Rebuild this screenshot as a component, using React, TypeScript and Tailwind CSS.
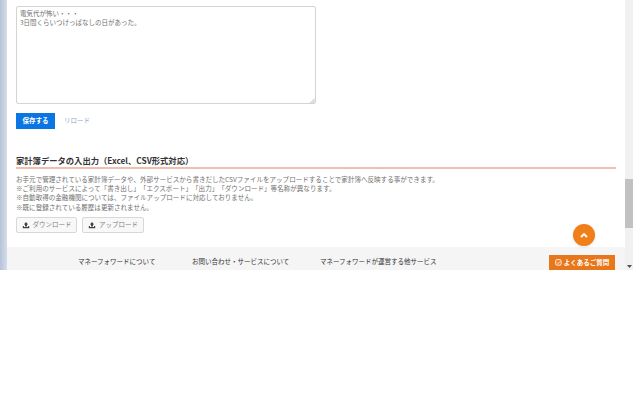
const jp = { fontFamily: '"Noto Sans CJK JP", "Liberation Sans", sans-serif' };

function Arrow() {
  return (
    <svg width="8" height="8" viewBox="0 0 8 8" className="shrink-0">
      <path d="M4 1 L6.2 3.6 H5 V5.5 H3 V3.6 H1.8 Z" fill="#444" />
      <path d="M0.8 5 V7.2 H7.2 V5 H6 V6 H2 V5 Z" fill="#444" />
    </svg>
  );
}

export default function App() {
  return (
    <div className="w-[640px] h-[400px] bg-white overflow-hidden [text-spacing-trim:space-all]" style={jp}>
      <div className="flex h-[270px] w-[633px]">
        <div className="w-[7px] shrink-0 bg-gradient-to-r from-[#b7c3d6] to-[#d3ddec]" />
        <div className="flex-1 min-w-0 flex flex-col">
          <div className="flex-1 pl-[9px] pr-[9px] pt-[6px]">
            <div className="relative w-[300px] h-[98px] border border-[#d4d4d4] rounded-[2px] px-[3px] py-[2px] text-[6.5px] leading-[9px] text-[#707070]">
              <div>電気代が怖い・・・</div>
              <div>3日間くらいつけっぱなしの日があった。</div>
              <svg width="5" height="5" viewBox="0 0 5 5" className="absolute right-0 bottom-0">
                <path d="M0.5 5 L5 0.5 M2.5 5 L5 2.5" stroke="#aaa" strokeWidth="0.8" />
              </svg>
            </div>
            <div className="flex items-center mt-[9px] h-[16px]">
              <div className="w-[39px] h-[16px] bg-[#0b76e3] text-white text-[6.5px] font-bold flex items-center justify-center">保存する</div>
              <div className="ml-[9px] text-[6.5px] text-[#8fa9c8]">リロード</div>
            </div>
            <div className="mt-[25px] text-[8.3px] leading-[12px] font-bold text-[#333]">家計簿データの入出力（Excel、CSV形式対応）</div>
            <div className="mt-[1px] h-[2px] bg-[#efbfae]" />
            <div className="mt-[6px] text-[6.55px] leading-[9.2px] text-[#707070] whitespace-nowrap">
              <div>お手元で管理されている家計簿データや、外部サービスから書きだしたCSVファイルをアップロードすることで家計簿へ反映する事ができます。</div>
              <div>※ご利用のサービスによって「書き出し」「エクスポート」「出力」「ダウンロード」等名称が異なります。</div>
              <div>※自動取得の金融機関については、ファイルアップロードに対応しておりません。</div>
              <div>※既に登録されている履歴は更新されません。</div>
            </div>
            <div className="flex gap-[5px] mt-[5px]">
              <div className="w-[61px] h-[16px] border border-[#d8d8d8] rounded-[2px] bg-[#f8f8f8] flex items-center justify-center gap-[3px] text-[6.5px] text-[#808080]"><Arrow />ダウンロード</div>
              <div className="w-[62px] h-[16px] border border-[#d8d8d8] rounded-[2px] bg-[#f8f8f8] flex items-center justify-center gap-[3px] text-[6.5px] text-[#808080]"><Arrow />アップロード</div>
            </div>
          </div>
          <div className="relative h-[23px] bg-[#f5f5f5] shrink-0 text-[6.5px] text-[#333]">
            <div className="flex pt-[9px] leading-[10px]">
              <div className="ml-[71px] w-[114px]">マネーフォワードについて</div>
              <div className="w-[128px]">お問い合わせ・サービスについて</div>
              <div>マネーフォワードが運営する他サービス</div>
            </div>
            <div className="absolute left-[542px] top-[8px] w-[66px] h-[15px] bg-[#e8761a] text-white font-bold flex items-center justify-center gap-[2px]">
              <svg width="7" height="7" viewBox="0 0 7 7"><rect x="0.7" y="0.7" width="5.4" height="5.4" rx="1" fill="none" stroke="#fff" strokeWidth="0.9" /><path d="M2 3.4 L3.2 4.6 L5 2.4" fill="none" stroke="#fff" strokeWidth="0.9" /></svg>
              よくあるご質問
            </div>
            <div className="absolute left-[566px] top-[-23px] w-[22px] h-[22px] rounded-full bg-[#f07f1a] shadow-sm flex items-center justify-center">
              <svg width="8" height="6" viewBox="0 0 8 6"><path d="M1 5 L4 2 L7 5" fill="none" stroke="#fff" strokeWidth="1.8" /></svg>
            </div>
          </div>
        </div>
        <div className="w-[8px] shrink-0 bg-[#f1f1f1] flex flex-col">
          <div className="mt-[179px] h-[49px] bg-[#c1c1c1]" />
          <div className="mt-auto h-[8px] flex items-center justify-center">
            <svg width="5" height="3" viewBox="0 0 5 3"><path d="M0 0 H5 L2.5 3 Z" fill="#505050" /></svg>
          </div>
        </div>
      </div>
    </div>
  );
}
